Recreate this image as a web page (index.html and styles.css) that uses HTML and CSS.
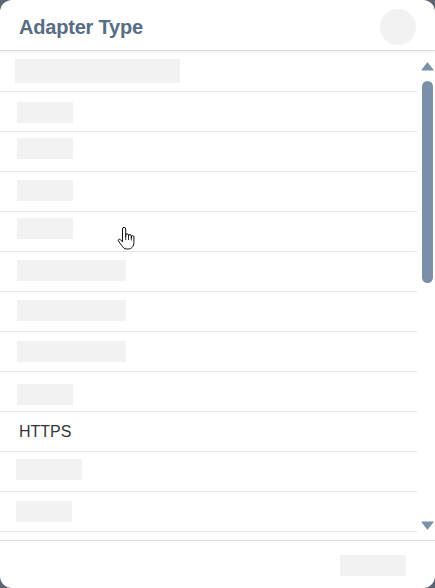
FILE: index.html
```html
<!DOCTYPE html>
<html lang="en">
<head>
<meta charset="utf-8">
<title>Adapter Type</title>
<link rel="stylesheet" href="styles.css">
</head>
<body>
<div class="dialog">
  <header class="header">
    <h1 class="title">Adapter Type</h1>
    <span class="avatar"></span>
  </header>
  <div class="body">
    <ul class="list">
      <li class="row first"><span class="ph w165 o9"></span></li>
      <li class="row"><span class="ph w56 o10"></span></li>
      <li class="row"><span class="ph w56 o6"></span></li>
      <li class="row"><span class="ph w56 o8"></span></li>
      <li class="row"><span class="ph w56 o6"></span></li>
      <li class="row"><span class="ph w109 o8"></span></li>
      <li class="row"><span class="ph w109 o8"></span></li>
      <li class="row"><span class="ph w109 o9"></span></li>
      <li class="row"><span class="ph w56 o12"></span></li>
      <li class="row text">HTTPS</li>
      <li class="row"><span class="ph w66 o7 shift"></span></li>
      <li class="row"><span class="ph w56 o9 shift"></span></li>
    </ul>
    <div class="scrollbar">
      <svg class="arrow" width="13" height="9" viewBox="0 0 13 9"><polygon points="6.5,1 12,8 1,8" fill="#7990a8" stroke="#7990a8" stroke-width="1.2" stroke-linejoin="round"/></svg>
      <div class="thumb"></div>
      <div class="spacer"></div>
      <svg class="arrow" width="13" height="9" viewBox="0 0 13 9"><polygon points="1,1 12,1 6.5,8" fill="#7990a8" stroke="#7990a8" stroke-width="1.2" stroke-linejoin="round"/></svg>
    </div>
  </div>
  <footer class="footer">
    <span class="ph w66"></span>
  </footer>
  <svg class="cursor" width="22" height="26" viewBox="0 0 22 26">
    <path d="M5.5,3 a1.6,1.6 0 0 1 3.2,0 V11 V9.2 a1.4,1.4 0 0 1 2.8,0 V11.5 V10 a1.4,1.4 0 0 1 2.8,0 V12 V11 a1.3,1.3 0 0 1 2.6,0 V16.5 c0,3.8 -2.2,6.5 -6,6.5 h-1 c-2.8,0 -3.8,-1.4 -5.4,-3.8 L1.4,15 c-0.7,-1.1 0.6,-2.3 1.7,-1.5 L5.5,15.8 Z" fill="#fff" stroke="#111" stroke-width="1" stroke-linejoin="round"/>
    <path d="M8.7,11 V14 M11.5,11.5 V14 M14.3,12 V14.5" stroke="#111" stroke-width="0.9" fill="none"/>
  </svg>
</div>
</body>
</html>
```

FILE: styles.css
```css
* {
  box-sizing: border-box;
}

html, body {
  margin: 0;
  padding: 0;
  height: 100%;
}

body {
  background: #5b6470;
  font-family: "Liberation Sans", Arial, sans-serif;
  overflow: hidden;
}

.dialog {
  position: relative;
  width: 435px;
  height: 588px;
  background: #fff;
  border-radius: 12px;
  overflow: hidden;
  display: flex;
  flex-direction: column;
}

.header {
  height: 50px;
  flex: none;
  display: flex;
  justify-content: space-between;
  align-items: flex-start;
  padding: 0 19px;
  box-shadow: 0 1px 0 #dcdcdc, 0 2px 4px rgba(0, 0, 0, 0.08);
  position: relative;
  z-index: 1;
}

.title {
  margin: 0;
  padding-top: 15px;
  font-size: 20px;
  line-height: 24px;
  font-weight: bold;
  color: #576d85;
  letter-spacing: -0.2px;
}

.avatar {
  width: 36px;
  height: 36px;
  margin-top: 9px;
  border-radius: 50%;
  background: #f2f2f2;
}

.body {
  flex: 1;
  display: flex;
  min-height: 0;
  overflow: hidden;
}

.list {
  list-style: none;
  margin: 0;
  padding: 0;
  width: 417px;
  flex: none;
}

.row {
  height: 40px;
  border-bottom: 1px solid #e5e5e5;
  display: flex;
  align-items: flex-start;
  padding-left: 17px;
}

.row.first {
  height: 42px;
  padding-left: 15px;
}

.row.text {
  align-items: center;
  padding-left: 19px;
  font-size: 16px;
  color: #32363a;
}

.ph {
  display: block;
  height: 21px;
  background: #f2f2f2;
}

.first .ph {
  height: 24px;
}

.shift {
  margin-left: -1px;
}

.w165 { width: 165px; }
.w109 { width: 109px; }
.w66 { width: 66px; }
.w56 { width: 56px; }

.o6 { margin-top: 6px; }
.o7 { margin-top: 7px; }
.o8 { margin-top: 8px; }
.o9 { margin-top: 9px; }
.o10 { margin-top: 10px; }
.o12 { margin-top: 12px; }

.scrollbar {
  width: 18px;
  flex: none;
  display: flex;
  flex-direction: column;
  align-items: center;
  padding: 12px 0 10px 3px;
  gap: 10px;
}

.arrow {
  display: block;
  flex: none;
}

.thumb {
  width: 11px;
  height: 202px;
  border-radius: 6px;
  background: #7990a8;
  flex: none;
}

.spacer {
  flex: 1;
}

.footer {
  height: 48px;
  flex: none;
  border-top: 1px solid #e0e0e0;
  display: flex;
  justify-content: flex-end;
  align-items: flex-start;
  padding: 14px 29px 0 0;
}

.cursor {
  position: absolute;
  left: 117px;
  top: 226px;
}
```
